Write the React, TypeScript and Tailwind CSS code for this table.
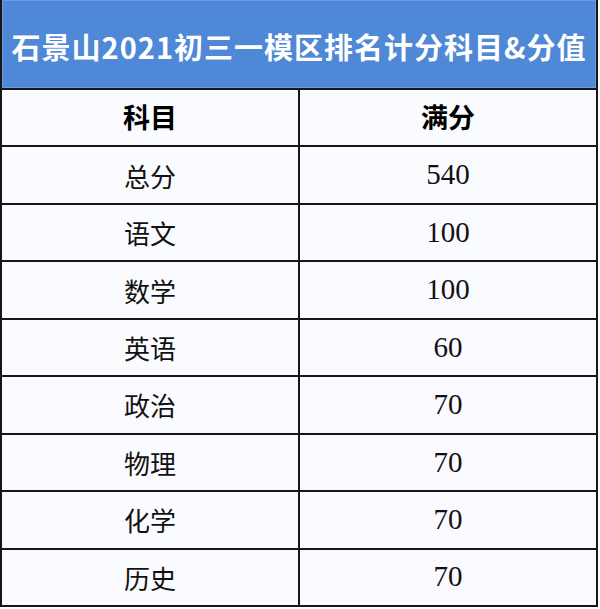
const rows: [string, string][] = [
  ['总分', '540'],
  ['语文', '100'],
  ['数学', '100'],
  ['英语', '60'],
  ['政治', '70'],
  ['物理', '70'],
  ['化学', '70'],
  ['历史', '70'],
];

const cjk = { fontFamily: '"Noto Sans CJK SC", "Noto Sans", sans-serif' };
const num = { fontFamily: '"Liberation Serif", "Noto Sans CJK SC", serif' };

export default function App() {
  return (
    <div className="w-[600px] h-[609px] bg-white">
      <div className="w-[598px] h-[607px] flex flex-col border-l-2 border-r-2 border-b-2 border-[#161616]">
        <div className="h-[90px] shrink-0 bg-[#4f88d6] border-b-2 border-[#161616] flex items-center justify-center">
          <div className="w-full h-full border border-[#6d9de0] flex items-center justify-center">
            <span
              className="text-white font-bold text-[29px] tracking-[1px] leading-none pt-[4px]"
              style={cjk}
            >
              石景山2021初三一模区排名计分科目&amp;分值
            </span>
          </div>
        </div>

        <div className="flex flex-1 border-b-2 border-[#161616] bg-[#fafbfe]">
          <div className="w-[298px] border-r-2 border-[#161616] flex items-center justify-center">
            <span className="font-bold text-[27px] text-black" style={cjk}>科目</span>
          </div>
          <div className="flex-1 flex items-center justify-center">
            <span className="font-bold text-[27px] text-black" style={cjk}>满分</span>
          </div>
        </div>

        {rows.map(([name, score], i) => (
          <div
            key={name}
            className={`flex flex-1 bg-[#fafbfe] ${i < rows.length - 1 ? 'border-b-2 border-[#161616]' : ''}`}
          >
            <div className="w-[298px] border-r-2 border-[#161616] flex items-center justify-center">
              <span className="text-[26px] text-[#111]" style={cjk}>{name}</span>
            </div>
            <div className="flex-1 flex items-center justify-center">
              <span className="text-[29px] text-[#111]" style={num}>{score}</span>
            </div>
          </div>
        ))}
      </div>
    </div>
  );
}
